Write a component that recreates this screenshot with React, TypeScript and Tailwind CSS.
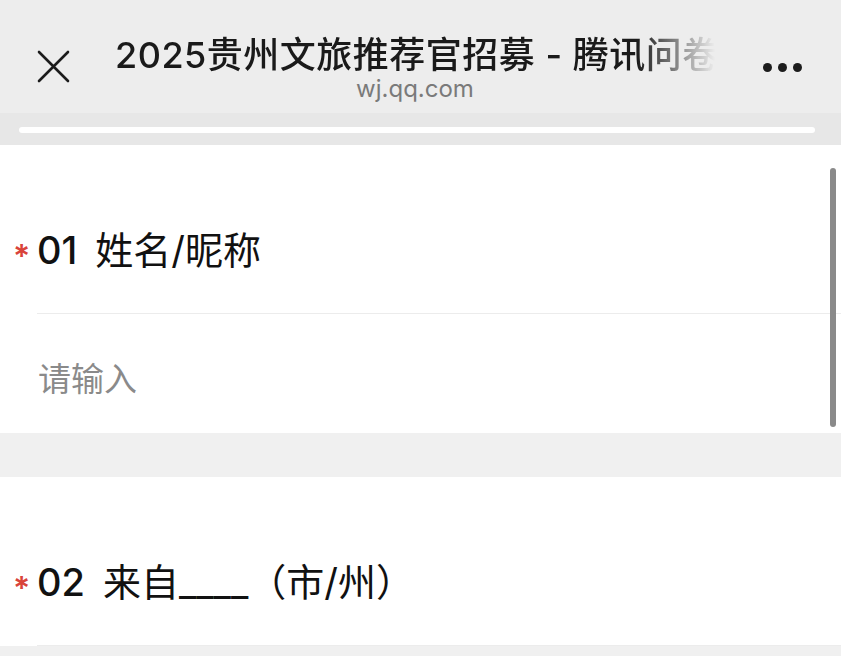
import React from "react";

const font = {
  fontFamily: 'Inter, "Noto Sans CJK SC", "Noto Sans", sans-serif',
};

function CloseIcon() {
  return (
    <svg viewBox="0 0 33 33" className="h-[33px] w-[33px]" fill="none">
      <path
        d="M2 2 L31 31 M31 2 L2 31"
        stroke="#1c1c1c"
        strokeWidth="2.6"
        strokeLinecap="round"
      />
    </svg>
  );
}

function Question({ no, title, placeholder }: { no: string; title: string; placeholder?: string }) {
  return (
    <section className="bg-white pt-[83px]">
      <div className="flex h-[44px] items-center">
        <span className="w-[37px] pl-[13px] text-[32px] font-semibold leading-none text-[#d9443a] translate-y-[7px]">
          *
        </span>
        <h2 className="text-[38px] leading-[44px] text-[#111] whitespace-nowrap">
          <span className="mr-[18px] font-medium">{no}</span>
          {title}
        </h2>
      </div>
      <div className="mt-[41px] ml-[37px] h-px bg-[#ececec]" />
      {placeholder && (
        <div className="mt-[45px] pb-[34px] pl-[38px] text-[33px] leading-[40px] text-[#8a8a8a]">
          {placeholder}
        </div>
      )}
    </section>
  );
}

export default function App() {
  return (
    <div className="relative h-[656px] w-[841px] overflow-hidden bg-[#f0f0f0]" style={font}>
      {/* top bar */}
      <header className="flex h-[113px] items-start bg-[#ededed]">
        <div className="w-[115px] pl-[37px] pt-[50px]">
          <CloseIcon />
        </div>
        <div className="flex w-[600px] flex-col pt-[35px]">
          <div className="overflow-hidden whitespace-nowrap text-[36px] font-medium leading-[40px] tracking-[0.5px] text-[#1a1a1a] [mask-image:linear-gradient(to_right,black_87%,transparent_100%)]">
            2025贵州文旅推荐官招募 - 腾讯问卷
          </div>
          <div className="text-center text-[24px] leading-[28px] text-[#7a7a7a]">wj.qq.com</div>
        </div>
        <div className="flex w-[126px] gap-[6px] pl-[48px] pt-[63px]">
          <span className="h-[9px] w-[9px] rounded-full bg-[#1c1c1c]" />
          <span className="h-[9px] w-[9px] rounded-full bg-[#1c1c1c]" />
          <span className="h-[9px] w-[9px] rounded-full bg-[#1c1c1c]" />
        </div>
      </header>

      {/* progress */}
      <div className="h-[32px] bg-[#e7e7e7] pl-[19px] pr-[26px] pt-[14px]">
        <div className="h-[6px] rounded-full bg-white" />
      </div>

      <Question no="01" title="姓名/昵称" placeholder="请输入" />
      <div className="h-[44px]" />
      <Question no="02" title="来自____（市/州）" />

      {/* scrollbar */}
      <div className="absolute left-[830px] top-[168px] h-[259px] w-[6px] rounded-full bg-[#8a8a8a]" />
    </div>
  );
}
